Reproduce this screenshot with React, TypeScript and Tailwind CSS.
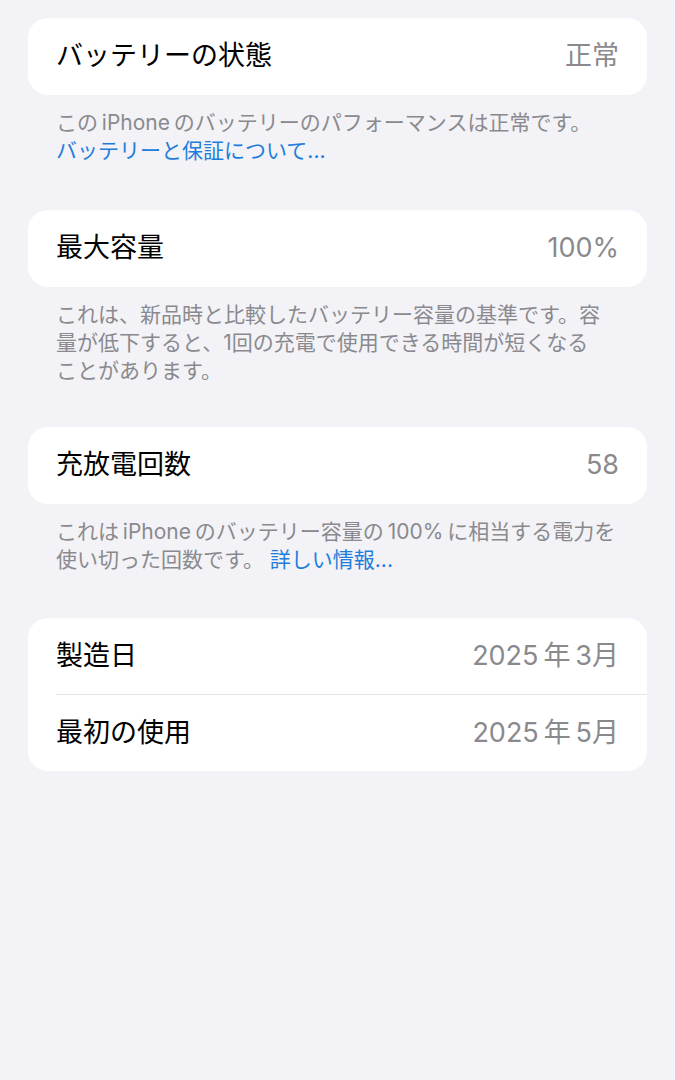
import React from 'react'

const font = { fontFamily: 'Inter, "Noto Sans CJK JP", sans-serif' }

function Row({ label, value, h = 'h-[77px]' }: { label: string; value: string; h?: string }) {
  return (
    <div className={`flex ${h} items-center justify-between pr-[28px]`}>
      <span className="text-[27px] text-black">{label}</span>
      <span className="text-[27px] text-[#8a8a8e]">{value}</span>
    </div>
  )
}

function Card({ children }: { children: React.ReactNode }) {
  return <div className="rounded-[20px] bg-white pl-[28px]">{children}</div>
}

function Footnote({ children }: { children: React.ReactNode }) {
  return (
    <p className="whitespace-nowrap px-[28px] pt-[14px] text-[21px] leading-[28px] text-[#8a8a8e]">
      {children}
    </p>
  )
}

export default function App() {
  return (
    <div className="min-h-[1080px] w-full bg-[#f2f2f7] px-[28px] pt-[18px]" style={font}>
      <Card>
        <Row label="バッテリーの状態" value="正常" />
      </Card>
      <Footnote>
        この{'\u2009'}iPhone{'\u2009'}のバッテリーのパフォーマンスは正常です。
        <br />
        <span className="text-[#1f7ddb]">バッテリーと保証について...</span>
      </Footnote>

      <div className="mt-[45px]">
        <Card>
          <Row label="最大容量" value="100%" />
        </Card>
        <Footnote>
          これは、新品時と比較したバッテリー容量の基準です。容
          <br />
          量が低下すると、1回の充電で使用できる時間が短くなる
          <br />
          ことがあります。
        </Footnote>
      </div>

      <div className="mt-[42px]">
        <Card>
          <Row label="充放電回数" value="58" />
        </Card>
        <Footnote>
          これは{'\u2009'}iPhone{'\u2009'}のバッテリー容量の{'\u2009'}100%{'\u2009'}に相当する電力を
          <br />
          使い切った回数です。 <span className="text-[#1f7ddb]">詳しい情報...</span>
        </Footnote>
      </div>

      <div className="mt-[44px]">
        <Card>
          <Row label="製造日" value={'2025\u2009年\u20093月'} h="h-[76px]" />
          <div className="h-px bg-[#e3e3e8]" />
          <Row label="最初の使用" value={'2025\u2009年\u20095月'} h="h-[76px]" />
        </Card>
      </div>
    </div>
  )
}
